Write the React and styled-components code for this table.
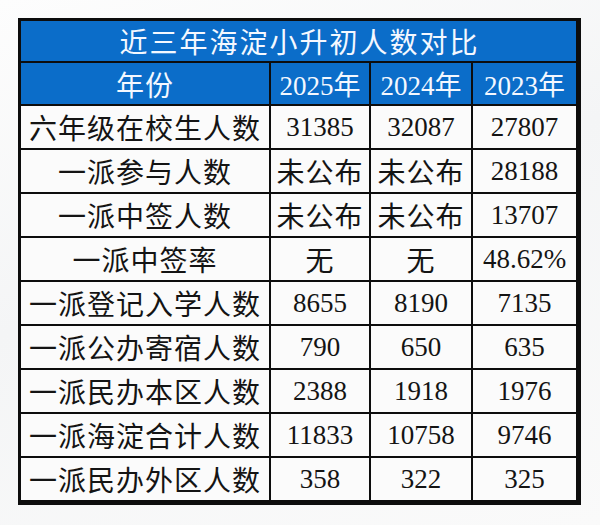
import React from 'react';
import styled, { createGlobalStyle } from 'styled-components';

const GlobalStyle = createGlobalStyle`
  html, body {
    margin: 0;
    padding: 0;
    background: #f8f8f8;
  }
`;

const Page = styled.div`
  width: 600px;
  height: 525px;
  box-sizing: border-box;
  padding: 18px 0 0 18px;
  background: linear-gradient(160deg, #fdfdfd 0%, #f4f5f6 45%, #fafafa 100%);
`;

const Table = styled.div`
  display: grid;
  grid-template-columns: 248px 98px 100px 103px;
  grid-auto-rows: 42px;
  grid-template-rows: 40px 41px;
  gap: 2px;
  width: 563px;
  box-sizing: border-box;
  padding: 3px 5px 5px 3px;
  background: #0d0d0d;
  font-family: "Liberation Serif", "Noto Sans CJK SC", serif;
`;

const Title = styled.div`
  grid-column: 1 / -1;
  background: #0b6dc9;
  color: #f4f8ff;
  font-size: 28px;
  letter-spacing: 2px;
  display: flex;
  align-items: center;
  justify-content: center;
  padding-left: 2px;
`;

const Cell = styled.div`
  display: flex;
  align-items: center;
  justify-content: center;
  background: ${p => (p.$head ? '#0b6dc9' : '#fbfbfb')};
  color: ${p => (p.$head ? '#f4f8ff' : '#141414')};
  font-size: ${p => (p.$num ? '27px' : '28px')};
  letter-spacing: ${p => (p.$num ? '0' : '1px')};
  white-space: nowrap;
`;

const rows = [
  ['六年级在校生人数', '31385', '32087', '27807'],
  ['一派参与人数', '未公布', '未公布', '28188'],
  ['一派中签人数', '未公布', '未公布', '13707'],
  ['一派中签率', '无', '无', '48.62%'],
  ['一派登记入学人数', '8655', '8190', '7135'],
  ['一派公办寄宿人数', '790', '650', '635'],
  ['一派民办本区人数', '2388', '1918', '1976'],
  ['一派海淀合计人数', '11833', '10758', '9746'],
  ['一派民办外区人数', '358', '322', '325'],
];

const isNum = v => /^[\d.%]+$/.test(v);

export default function App() {
  return (
    <Page>
      <GlobalStyle />
      <Table>
        <Title>近三年海淀小升初人数对比</Title>
        <Cell $head>年份</Cell>
        <Cell $head $num>2025年</Cell>
        <Cell $head $num>2024年</Cell>
        <Cell $head $num>2023年</Cell>
        {rows.map(row =>
          row.map((v, i) => (
            <Cell key={row[0] + i} $num={isNum(v)}>{v}</Cell>
          ))
        )}
      </Table>
    </Page>
  );
}
